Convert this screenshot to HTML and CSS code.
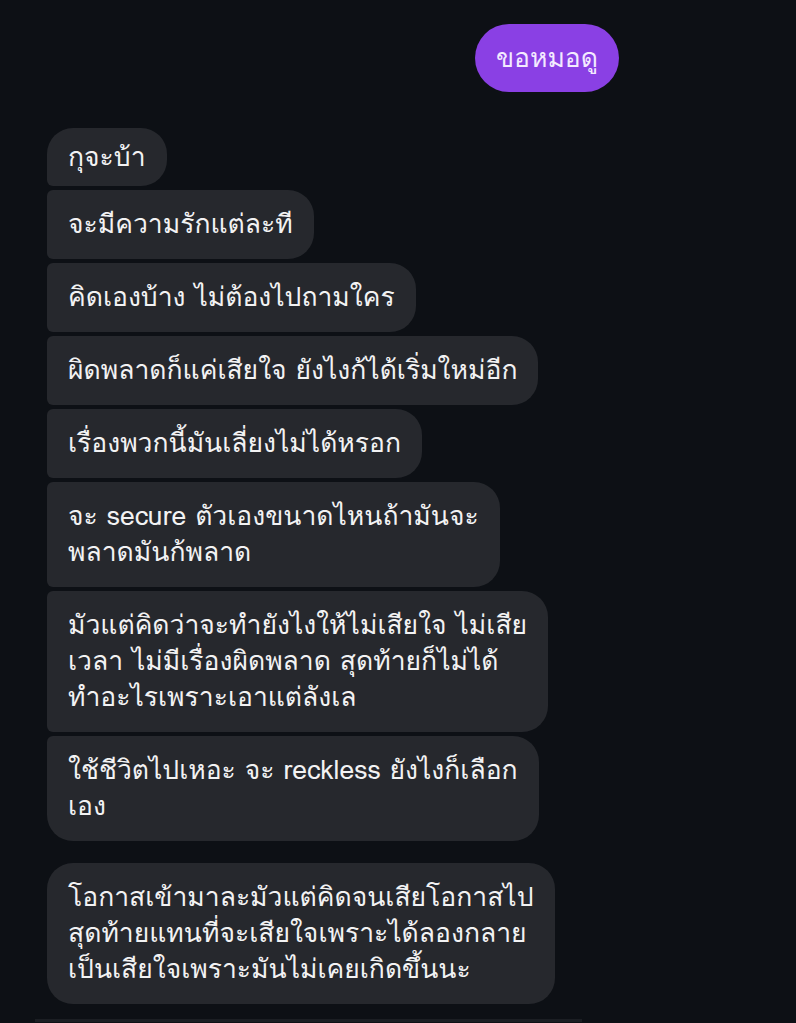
FILE: index.html
```html
<!DOCTYPE html>
<html lang="th">
  <head>
    <meta charset="UTF-8" />
    <meta name="viewport" content="width=device-width, initial-scale=1.0" />
    <title>Chat</title>
    <link rel="stylesheet" href="styles.css">
  </head>
  <body>
    <div class="chat">
      <div class="row me">
        <div class="bubble purple">ขอหมอดู</div>
      </div>

      <div class="group">
        <div class="bubble first short">กุจะบ้า</div>
        <div class="bubble">จะมีความรักแต่ละที</div>
        <div class="bubble">คิดเองบ้าง ไม่ต้องไปถามใคร</div>
        <div class="bubble">ผิดพลาดก็แค่เสียใจ ยังไงก้ได้เริ่มใหม่อีก</div>
        <div class="bubble">เรื่องพวกนี้มันเลี่ยงไม่ได้หรอก</div>
        <div class="bubble">จะ secure ตัวเองขนาดไหนถ้ามันจะ<br>พลาดมันก้พลาด</div>
        <div class="bubble">มัวแต่คิดว่าจะทำยังไงให้ไม่เสียใจ ไม่เสีย<br>เวลา ไม่มีเรื่องผิดพลาด สุดท้ายก็ไม่ได้<br>ทำอะไรเพราะเอาแต่ลังเล</div>
        <div class="bubble last">ใช้ชีวิตไปเหอะ จะ reckless ยังไงก็เลือก<br>เอง</div>
      </div>

      <div class="group">
        <div class="bubble single">โอกาสเข้ามาละมัวแต่คิดจนเสียโอกาสไป<br>สุดท้ายแทนที่จะเสียใจเพราะได้ลองกลาย<br>เป็นเสียใจเพราะมันไม่เคยเกิดขึ้นนะ</div>
      </div>

      <div class="composer-line"></div>
    </div>
  </body>
</html>
```

FILE: styles.css
```css
* {
  margin: 0;
  padding: 0;
  box-sizing: border-box;
}
body {
  background-color: #0d1015;
  font-family: "Loma", "Liberation Sans", sans-serif;
  color: #f2f2f3;
  height: 1023px;
  overflow: hidden;
}
.chat {
  width: 630px;
  display: flex;
  flex-direction: column;
  padding: 24px 0 0 47px;
}
.row.me {
  display: flex;
  justify-content: flex-end;
  padding-right: 11px;
  margin-bottom: 36px;
}
.bubble {
  background-color: #26282d;
  font-size: 26.5px;
  line-height: 36px;
  padding: 16px 21px 17px 21px;
  border-radius: 6px 26px 26px 6px;
  align-self: flex-start;
  white-space: nowrap;
}
.bubble.purple {
  background-color: #8a40e4;
  color: #f3eaff;
  border-radius: 34px;
  padding: 16px 21px;
}
.group {
  display: flex;
  flex-direction: column;
  gap: 4px;
  margin-bottom: 22px;
}
.bubble.first {
  border-top-left-radius: 26px;
}
.bubble.short {
  padding-top: 11px;
  padding-bottom: 11px;
}
.bubble.last {
  border-bottom-left-radius: 26px;
}
.bubble.single {
  border-radius: 26px;
}
.composer-line {
  height: 3px;
  width: 547px;
  margin-left: -12px;
  margin-top: -7px;
  background-color: #1b1e23;
}
```
